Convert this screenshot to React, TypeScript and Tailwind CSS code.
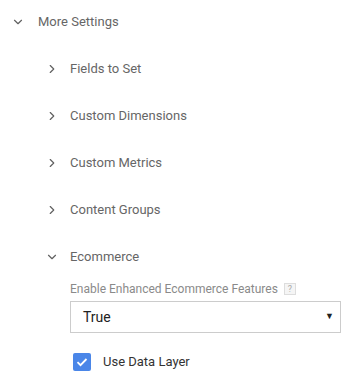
import { ChevronDown, ChevronRight } from "lucide-react";

const sections = ["Fields to Set", "Custom Dimensions", "Custom Metrics", "Content Groups"];

function Row({ label, open, indent }: { label: string; open?: boolean; indent?: boolean }) {
  return (
    <div className={`flex h-[42px] items-center ${indent ? "pl-[45px]" : "pl-[11px]"}`}>
      <span className="flex w-[14px] justify-center text-[#616161]">
        {open ? (
          <ChevronDown size={14} strokeWidth={2} />
        ) : (
          <ChevronRight size={14} strokeWidth={2} />
        )}
      </span>
      <span className={`${indent ? "ml-[11px]" : "ml-[13px]"} text-[13px] text-[#666]`}>{label}</span>
    </div>
  );
}

export default function App() {
  return (
    <div className="h-[376px] w-[349px] bg-white pt-[1px] font-['Roboto',sans-serif]">
      <div className="flex flex-col gap-[5px]">
        <Row label="More Settings" open />
        {sections.map((s) => (
          <Row key={s} label={s} indent />
        ))}
        <Row label="Ecommerce" open indent />
      </div>
      <div className="ml-[70px] mr-[8px] mt-[3px]">
        <div className="flex h-[16px] items-center text-[12px] text-[#8a8a8a]">
          Enable Enhanced Ecommerce Features
          <span className="ml-[6px] flex h-[12px] w-[12px] items-center justify-center border border-[#ddd] bg-[#f5f5f5] text-[9px] leading-none text-[#aaa]">
            ?
          </span>
        </div>
        <div className="mt-[4px] flex h-[32px] items-center justify-between border border-[#ccc] pl-[12px] pr-[6px] text-[14px] text-[#222]">
          <span>True</span>
          <span className="text-[9px] text-[#222]">▼</span>
        </div>
        <label className="mt-[19px] flex items-center">
          <span className="ml-[3px] flex h-[18px] w-[18px] items-center justify-center rounded-[2px] bg-[#4a86e8]">
            <svg width="14" height="14" viewBox="0 0 14 14">
              <path d="M2.5 7.2l3 3 6-6.2" fill="none" stroke="white" strokeWidth="1.8" />
            </svg>
          </span>
          <span className="ml-[12px] text-[13px] text-[#333]">Use Data Layer</span>
        </label>
      </div>
    </div>
  );
}
